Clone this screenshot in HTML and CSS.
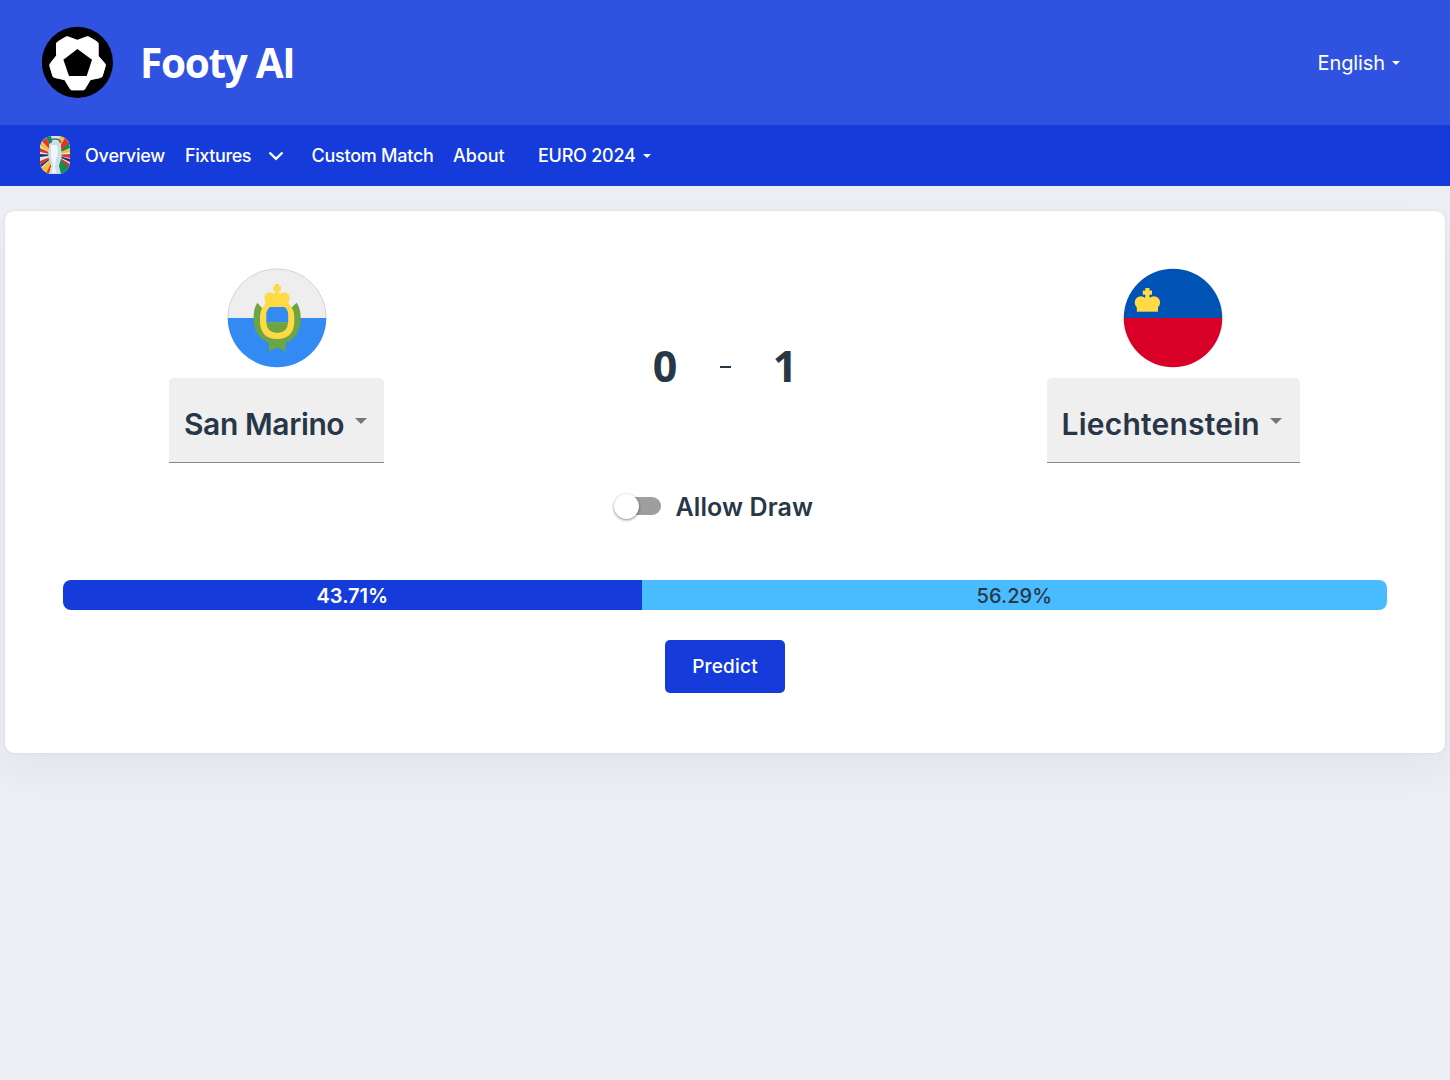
FILE: index.html
```html
<!DOCTYPE html>
<html lang="en">
<head>
<meta charset="utf-8">
<title>Footy AI</title>
<link rel="stylesheet" href="styles.css">
</head>
<body>
<header class="topbar">
  <a class="brand">
    <svg class="brand-logo" viewBox="42 26 72 72"><circle cx="77.4" cy="62.4" r="35.6"/><path fill="#fff" stroke="#fff" stroke-linejoin="round" d="M77.3 40.300 86.500 36.900Q88 36.500 89.300 37.200L97 41.800Q98.200 42.600 98.200 44V56L104.800 63.500Q105.700 64.600 105.300 66L102.300 76Q101.900 77.300 100.500 77.600L90.300 79.700 84.800 89Q84.200 89.900 83 89.900H72Q70.900 89.900 70.300 89L64.700 79.700 54.500 77.500Q53.200 77.200 52.800 76L49.800 66Q49.500 64.700 50.300 63.500L56.500 55.700V44Q56.500 42.600 57.600 41.900L65.500 37.200Q67 36.300 68.500 37Z"/><path d="M77.4 49 92 59.7 86.7 76H69l-5.6-16.3Z"/></svg>
    <span class="brand-name">Footy AI</span>
  </a>
  <div class="language"><span class="t-english">English</span><i class="caret"></i></div>
</header>
<nav class="nav">
  <svg class="cup" viewBox="0 0 30 38">
    <clipPath id="cup-clip"><rect width="30" height="38" rx="12"/></clipPath>
    <g clip-path="url(#cup-clip)">
      <rect width="30" height="38" fill="#dfe5e6"/>
      <path fill="#178c50" d="M15 19 5 0h6ZM15 19 30 31 24 38h-6ZM15 19 29 6l1 6Z"/>
      <path fill="#f4bd35" d="M15 19 0 10 3 4ZM15 19 0 34v-4l5 8h4ZM15 19 20 0l6 2ZM15 19 30 12v4Z"/>
      <path fill="#e0332d" d="M15 19 2 5l4-3ZM15 19 0 16v-4ZM15 19 0 29v-4ZM15 19 9 38H6ZM15 19 25 2l4 5ZM15 19 30 18v4ZM15 19 30 28v4Z"/>
      <path fill="#213067" d="M15 19 0 21v-3ZM15 19 30 23v3ZM15 19 0 32v-3Z"/>
      <path fill="#c9e0e9" d="M9 8q6-5 12 0v5q2 6-1 13l-1 4 2 8H9l2-8-1-4q-3-7-1-13Z"/>
      <path fill="none" stroke="#466f85" stroke-width="1.300" d="M9 7q1-4 6-4t6 4"/>
      <path fill="#eef8fa" d="M11 9h6q2 8-1 14l-1 8 1 6h-4l1-8-2-9Z"/>
    </g>
  </svg>
  <a class="t-overview">Overview</a>
  <a class="t-fixtures">Fixtures</a>
  <svg class="chevron" viewBox="0 0 16 10"><path d="m1.5 1.5 6.5 6.3 6.5-6.3"/></svg>
  <a class="t-custom">Custom Match</a>
  <a class="t-about">About</a>
  <a class="t-euro">EURO 2024</a><i class="caret"></i>
</nav>
<main class="card">
  <section class="match">
    <div class="team home">
      <svg class="flag" viewBox="0 0 100 100">
        <clipPath id="flag-clip"><circle cx="50" cy="50" r="49.3"/></clipPath>
        <g clip-path="url(#flag-clip)"><path fill="#eee" d="M0 0h100v50H0Z"/><path fill="#338af3" d="M0 50h100v50H0Z"/></g>
        <path fill="none" stroke="#ccc" stroke-width=".8" d="M.8 50a49.2 49.2 0 0 1 98.4 0"/>
        <path fill="#6da544" d="M30.3 34.7q-4 6-3.7 17.300Q27 69 42 75v8.700l8.300-4.400 8.400 4.400V75Q73 69 73.700 52q.3-11-4-17.300L64 40 50 62 35 40Z"/>
        <g fill="#ffda44"><path d="M48 16h4v2.500h2v4h-2V27h-4v-4.500h-2v-4h2Z"/><circle cx="43" cy="30" r="5.700"/><circle cx="57" cy="30" r="5.700"/><circle cx="50" cy="29" r="4.500"/><path d="M38.500 31h23v8h-23Z"/><path d="M39 35h22q6.300 6 6.300 14v5Q66.500 71 50.100 71T33 54v-5q0-8 6-14Z"/></g>
        <path fill="#338af3" d="M43 39h14.500q3.700 3 3.700 7.500v8H39.300v-8Q39.300 42 43 39Z"/>
        <path fill="#6da544" d="M39.300 54.300h21.900q-.7 10.700-11 10.700t-10.900-10.700Z"/>
      </svg>
      <div class="select"><span class="t-home">San Marino</span><i class="arrow"></i></div>
    </div>
    <div class="score"><b class="goal">0</b><span class="dash"></span><b class="goal">1</b></div>
    <div class="team away">
      <svg class="flag" viewBox="0 0 100 100">
        <g clip-path="url(#flag-clip)"><path fill="#0052b4" d="M0 0h100v50H0Z"/><path fill="#d80027" d="M0 50h100v50H0Z"/></g>
        <g fill="#ffda44"><path d="M22.300 20h4.200v2.500H29v4.200h-2.500V32h-4.200v-5.300h-2.500v-4.200h2.500Z"/><circle cx="17.900" cy="34.500" r="6.200"/><circle cx="30.900" cy="34.500" r="6.200"/><circle cx="24.400" cy="33" r="4.200"/><path d="M13.800 34H35v9.700H13.800Z"/></g>
      </svg>
      <div class="select"><span class="t-away">Liechtenstein</span><i class="arrow"></i></div>
    </div>
  </section>
  <label class="draw"><span class="switch"><span class="knob"></span></span><span class="t-draw">Allow Draw</span></label>
  <div class="odds">
    <div class="odds-home" style="width:43.71%"><span class="t-odds">43.71%</span></div>
    <div class="odds-away" style="width:56.29%"><span class="t-odds2">56.29%</span></div>
  </div>
  <button class="predict"><span class="t-predict">Predict</span></button>
</main>
</body>
</html>
```
FILE: styles.css
```css
* { box-sizing: border-box; }
body { margin: 0; min-height: 100vh; background: #edeef3; color: #283747; font-family: Inter, sans-serif; }
svg { display: block; flex: none; }
.topbar { height: 125px; padding: 0 50px 1px 42px; display: flex; align-items: center; justify-content: space-between; background: #2f53e0; color: #fff; }
.brand { display: flex; align-items: center; gap: 26px; }
.brand-logo { width: 72px; height: 72px; }
.brand-name { font: 700 40.5px "Open Sans", sans-serif; letter-spacing: -1.3px; }
.language { display: flex; align-items: center; gap: 7px; padding-top: 1px; font-size: 20px; }
.t-english { letter-spacing: -.1px; }
.caret { width: 0; height: 0; border: 4px solid transparent; border-top-color: #fff; border-bottom: 0; }
.nav { height: 61px; padding-left: 40px; display: flex; align-items: center; background: #153bdb; color: #fff; font-size: 18px; font-weight: 500; white-space: nowrap; }
.cup { width: 30px; height: 38px; margin: -1px 15px 0 0; }
.t-overview, .t-fixtures, .t-custom, .t-about, .t-euro { flex: none; }
.t-overview { width: 100px; letter-spacing: -.2px; }
.t-fixtures { width: 83px; letter-spacing: -.4px; }
.t-custom { width: 141.5px; letter-spacing: -.25px; }
.t-about { width: 85px; }
.t-euro { width: 104.5px; letter-spacing: -.25px; }
.chevron { width: 16px; height: 10px; margin-right: 27.5px; fill: none; stroke: #fff; stroke-width: 2.4; }
.card { height: 542px; margin: 25px 5px 0; padding-top: 57px; display: flex; flex-direction: column; align-items: center; background: #fff; border-radius: 9px; box-shadow: 0 0 2px #22304928, 0 18px 36px #2230490b; }
.match { width: 100%; height: 195px; display: grid; grid-template-columns: 543px 354px 543px; }
.team { display: flex; flex-direction: column; align-items: center; }
.flag { width: 100px; height: 100px; margin-bottom: 10px; }
.away { margin-left: -1px; }
.select { height: 85px; padding: 7px 17.5px 0 15px; display: flex; align-items: center; justify-content: space-between; background: #efefef; border-bottom: 1px solid #888; border-radius: 5px 5px 0 0; font-size: 30px; font-weight: 600; white-space: nowrap; }
.home .select { width: 215px; }
.away .select { width: 253px; }
.t-home { letter-spacing: -.4px; }
.t-away { letter-spacing: .22px; }
.arrow { width: 0; height: 0; margin-top: -6px; border: 6.5px solid transparent; border-top-color: #757575; border-bottom: 0; }
.score { height: 195px; display: grid; grid-template-columns: 40px 80px 40px; align-items: center; justify-content: center; justify-items: center; }
.goal { font: 700 43px "Open Sans", sans-serif; }
.dash { width: 11px; height: 2px; margin-top: 3px; background: #283747; }
.draw { height: 38px; margin: 24px 24px 0 0; display: flex; align-items: center; gap: 15px; font-size: 25px; font-weight: 600; white-space: nowrap; }
.switch { width: 47px; height: 18px; padding-left: 11px; display: flex; align-items: center; border-radius: 9px; background: linear-gradient(#9e9e9e, #9e9e9e) right / 36px 18px no-repeat; }
.knob { flex: none; width: 25px; height: 25px; margin-left: -11px; border-radius: 50%; background: #fff; box-shadow: 0 1px 3px #0007; }
.t-draw { width: 137px; padding-top: 1px; letter-spacing: .1px; }
.odds { width: 1324px; height: 30px; margin-top: 55px; display: flex; border-radius: 8px; overflow: hidden; font-size: 20px; }
.odds-home, .odds-away { display: flex; align-items: center; justify-content: center; padding-top: 1px; }
.odds-home { background: #153bdb; color: #fff; font-weight: 600; }
.odds-away { background: #49bcff; font-weight: 500; }
.t-odds2 { letter-spacing: .1px; }
.predict { width: 120px; height: 53px; margin-top: 30px; padding: 0; border: 0; border-radius: 5px; background: #153bdb; color: #fff; font: 500 19px Inter, sans-serif; letter-spacing: .2px; }
```
